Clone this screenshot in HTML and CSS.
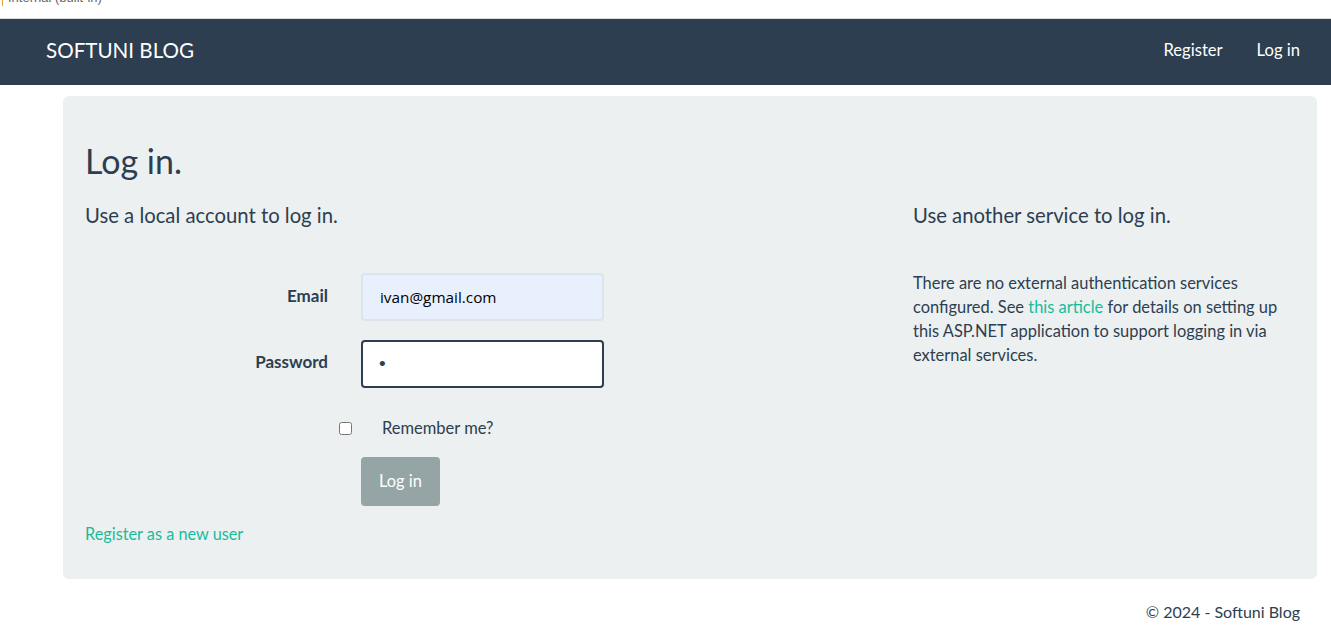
FILE: index.html
```html
<!DOCTYPE html>
<html lang="en">
<head>
<meta charset="utf-8">
<title>Log in - Softuni Blog</title>
<link rel="stylesheet" href="styles.css">
</head>
<body>
<div class="topstrip"><div class="topstrip-text">Internal (built-in)</div></div>
<nav class="navbar">
  <a class="brand" href="#">SOFTUNI BLOG</a>
  <div class="nav-links">
    <a href="#">Register</a>
    <a href="#">Log in</a>
  </div>
</nav>
<main class="main">
  <div class="jumbotron">
    <h2 class="title">Log in.</h2>
    <div class="columns">
      <section class="col-left">
        <h4 class="subtitle">Use a local account to log in.</h4>
        <form class="login-form">
          <div class="form-row">
            <label class="form-label" for="email">Email</label>
            <input class="input input-autofill" id="email" type="text" value="ivan@gmail.com">
          </div>
          <div class="form-row">
            <label class="form-label label-pw" for="password">Password</label>
            <input class="input input-focus" id="password" type="password" value="a">
          </div>
          <div class="check-row">
            <input class="checkbox" type="checkbox" id="remember">
            <label class="check-label" for="remember">Remember me?</label>
          </div>
          <div class="btn-row">
            <button class="btn" type="button">Log in</button>
          </div>
        </form>
        <a class="link register-link" href="#">Register as a new user</a>
      </section>
      <section class="col-right">
        <h4 class="subtitle">Use another service to log in.</h4>
        <p class="info">There are no external authentication services configured. See <a class="link" href="#">this article</a> for details on setting up this ASP.NET application to support logging in via external services.</p>
      </section>
    </div>
  </div>
  <footer class="footer">© 2024 - Softuni Blog</footer>
</main>
</body>
</html>
```

FILE: styles.css
```css
* { box-sizing: border-box; }
html, body { margin: 0; padding: 0; }
body {
  font-family: Lato, "Liberation Sans", sans-serif;
  font-size: 16px;
  color: #2c3e50;
  background: #fff;
}
a { text-decoration: none; }

.topstrip {
  height: 19px;
  border-bottom: 1px solid #dcdcdc;
  overflow: hidden;
  padding-left: 2px;
}
.topstrip-text {
  width: fit-content;
  margin-top: -10px;
  border-left: 1px solid #e8a33c;
  padding-left: 5px;
  font-family: "Liberation Sans", sans-serif;
  font-size: 13px;
  line-height: 16px;
  color: #666;
}

.navbar {
  height: 66px;
  background: #2c3e50;
  display: flex;
  align-items: center;
  justify-content: space-between;
  padding: 0 31px 4px 46px;
}
.brand {
  color: #fff;
  font-size: 20.6px;
  line-height: 24px;
}
.nav-links {
  display: flex;
  gap: 34px;
}
.nav-links a {
  color: #fff;
  font-size: 16.6px;
  line-height: 24px;
}

.main {
  margin-left: 63px;
  width: 1254px;
  padding-top: 11px;
}
.jumbotron {
  background: #ecf0f1;
  border-radius: 6px;
  height: 483px;
  padding: 43px 22px 0 22px;
}
.title {
  margin: 0;
  font-size: 34px;
  line-height: 43px;
  font-weight: 400;
}
.columns {
  display: grid;
  grid-template-columns: 828px 1fr;
  margin-top: 22px;
}
.subtitle {
  margin: 0;
  font-size: 20.3px;
  line-height: 22px;
  font-weight: 400;
}
.login-form {
  margin-top: 47px;
}
.form-row {
  display: grid;
  grid-template-columns: 243px 243px;
  column-gap: 33px;
  align-items: start;
  margin-bottom: 19px;
}
.form-label {
  text-align: right;
  font-weight: 700;
  font-size: 17px;
  line-height: 24px;
  padding-top: 11px;
}
.label-pw { padding-top: 10px; }
.input {
  height: 48px;
  border-radius: 4px;
  padding: 0 17px;
  font-size: 16px;
  color: #000;
  outline: none;
}
.input-autofill {
  background: #e8f0fe;
  border: 2px solid #dce4ec;
  font-family: "Open Sans", "Noto Sans", sans-serif;
  font-size: 15.3px;
}
.input-focus {
  background: #fff;
  border: 2px solid #2c3e50;
  color: #2c3e50;
  font-family: "Liberation Sans", sans-serif;
  font-size: 19px;
  padding-left: 16px;
}
.check-row {
  display: flex;
  align-items: center;
  margin-top: 28px;
  height: 24px;
  padding-left: 254px;
}
.checkbox {
  width: 13px;
  height: 13px;
  margin: 0 30px 0 0;
}
.check-label {
  font-size: 16.5px;
}
.btn-row {
  margin-top: 17px;
  padding-left: 276px;
}
.btn {
  height: 49px;
  background: #95a5a6;
  border: none;
  border-radius: 4px;
  color: #fff;
  font-family: Lato, sans-serif;
  font-size: 16.4px;
  padding: 0 18px 2px;
}
.link { color: #18bc9c; }
.register-link {
  display: block;
  margin-top: 16px;
  line-height: 24px;
  font-size: 16.3px;
}
.info {
  margin: 45px 0 0 0;
  font-size: 16.45px;
  line-height: 24px;
  max-width: 375px;
}
.footer {
  text-align: right;
  padding-right: 17px;
  margin-top: 21px;
  line-height: 24px;
  font-size: 16px;
}
```
